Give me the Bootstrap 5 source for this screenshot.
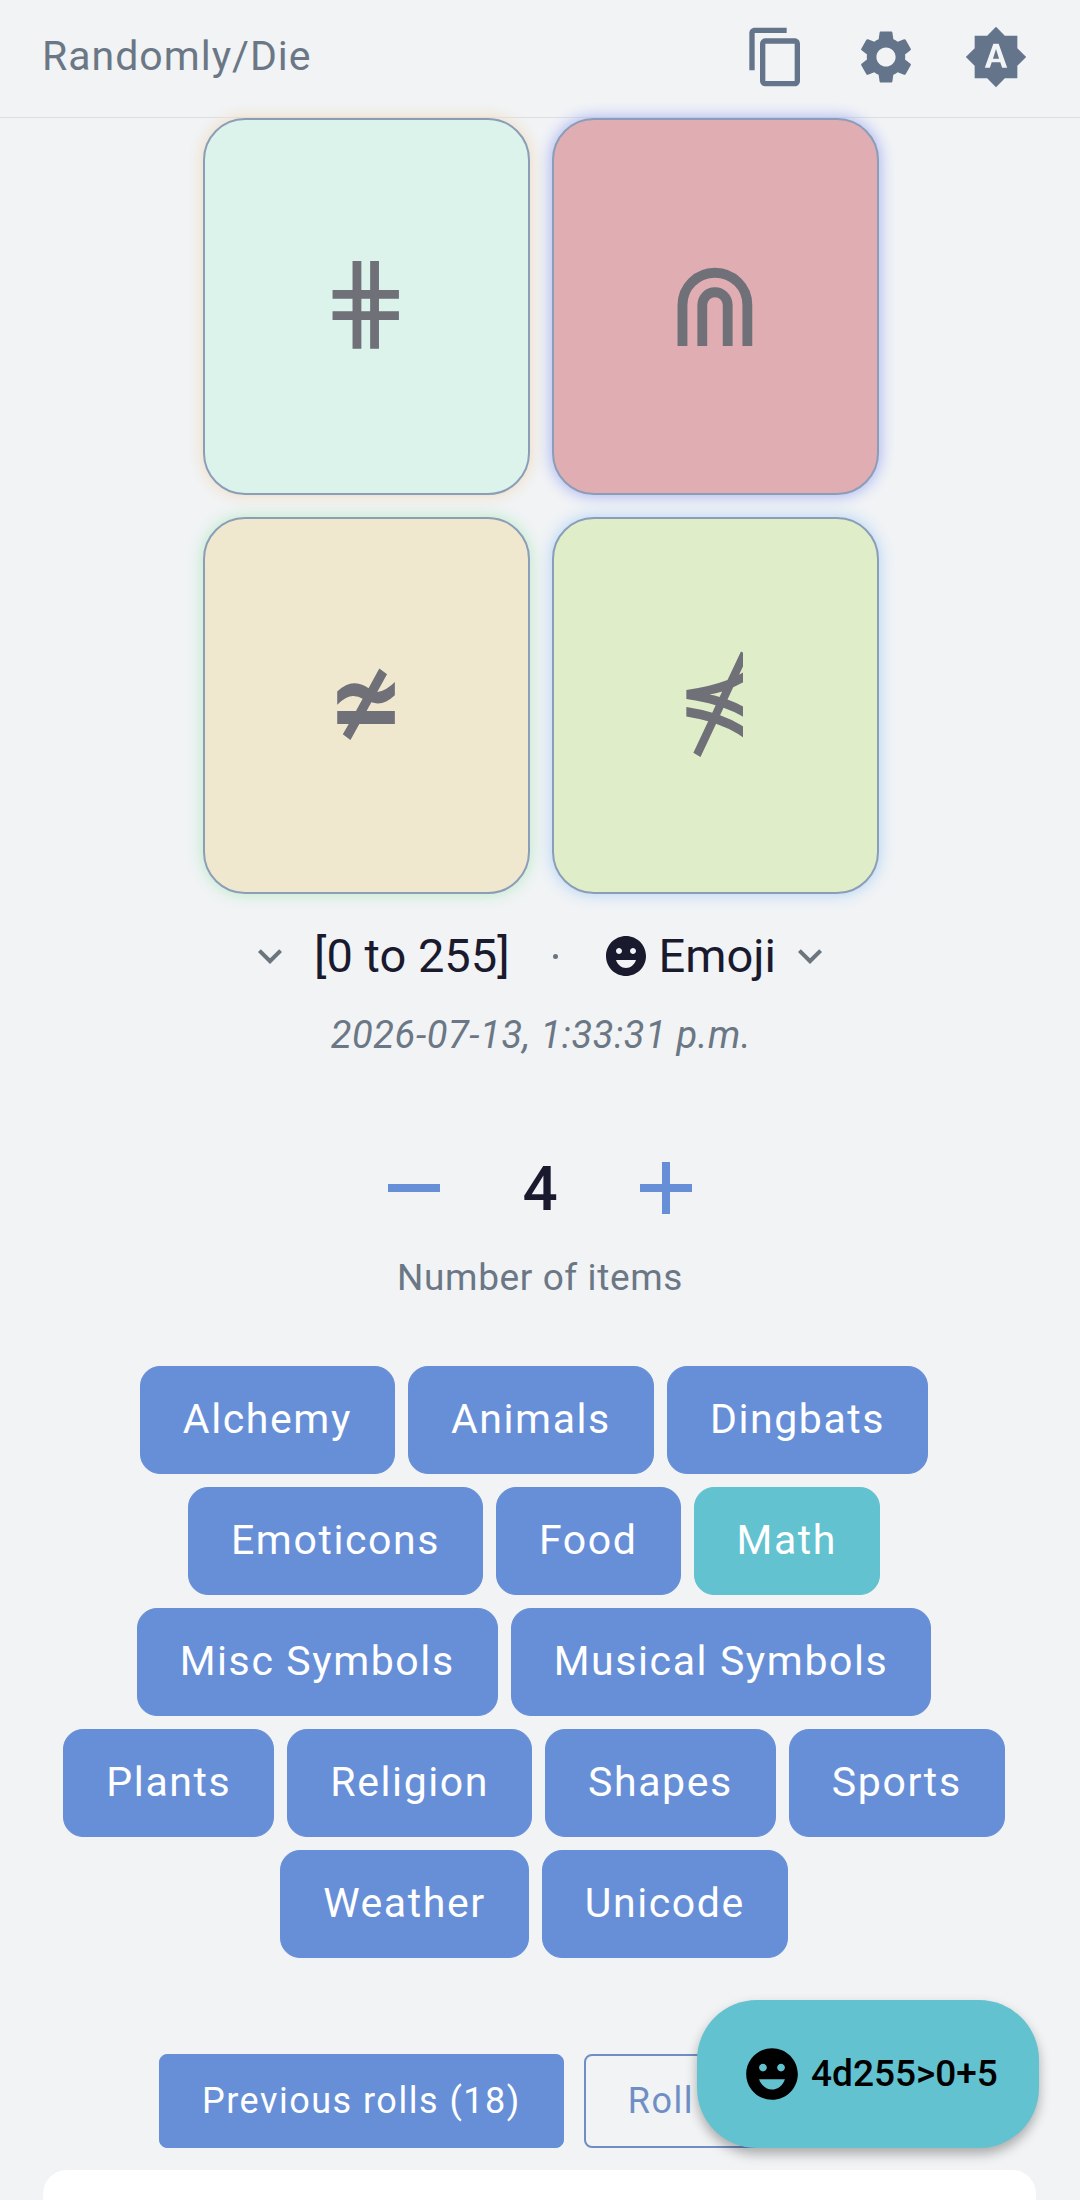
<!DOCTYPE html>
<html lang="en">
<head>
    <meta charset="UTF-8">
    <meta name="viewport" content="width=device-width, initial-scale=1.0">
    <title>Randomly/Die</title>
    <link href="https://cdn.jsdelivr.net/npm/bootstrap@5.3.0/dist/css/bootstrap.min.css" rel="stylesheet">
    <script src="https://cdn.jsdelivr.net/npm/bootstrap@5.3.0/dist/js/bootstrap.bundle.min.js"></script>
    <style>
        html, body {
            height: 2200px;
            overflow: hidden;
        }
        body {
            background-color: #f1f3f5;
            font-family: Roboto, "Liberation Sans", sans-serif;
            color: #1a1a2e;
        }
        .app-bar {
            height: 118px;
            padding: 0 52px 4px 42px;
            border-bottom: 1px solid #dcdee1;
        }
        .app-title {
            font-size: 41px;
            letter-spacing: 1px;
            color: #6b7785;
        }
        .app-icons {
            gap: 46px;
        }
        .app-icons svg {
            width: 64px;
            height: 64px;
            fill: #64748b;
        }
        .dice-grid {
            grid-template-columns: 327px 327px;
            grid-auto-rows: 377px;
            gap: 22px;
            justify-content: center;
            padding-left: 1px;
        }
        .die-face {
            border: 2px solid #8c9db8;
            border-radius: 42px;
            font-family: "DejaVu Sans", sans-serif;
            font-size: 106px;
            line-height: 1;
            color: #6f7078;
        }
        .face-a { background: #dcf3ec; box-shadow: 0 0 14px 2px #f0dfc8; padding-bottom: 10px; }
        .face-b { background: #e0adb3; box-shadow: 0 0 14px 2px #b0baf2; padding-bottom: 4px; font-size: 118px; }
        .face-c { background: #f0e7cf; box-shadow: 0 0 14px 2px #c4ecd0; padding-bottom: 8px; font-weight: 700; font-size: 92px; }
        .face-d { background: #dfedc9; box-shadow: 0 0 14px 2px #bcd9f6; padding-bottom: 14px; font-size: 112px; }
        .glyph-tall {
            display: inline-block;
            transform: scaleY(1.22);
        }
        .glyph-cut {
            display: inline-block;
            width: 68px;
            margin-right: 13px;
            line-height: 1.3;
            overflow: hidden;
        }
        .meta-row {
            height: 72px;
            margin-top: 26px;
            font-size: 47px;
        }
        .meta-row svg {
            width: 48px;
            height: 48px;
        }
        .meta-chevron {
            fill: #6c757d;
        }
        .meta-emoji {
            fill: #1a1a2e;
            margin-right: 9px;
        }
        .meta-range {
            margin: 0 20px;
        }
        .meta-dot {
            width: 5px;
            height: 5px;
            background: #6c757d;
            border-radius: 50%;
            margin: 0 44px 0 23px;
        }
        .meta-type {
            margin-right: 10px;
        }
        .roll-date {
            height: 56px;
            margin-top: 15px;
            padding-left: 2px;
            font-size: 38px;
            font-style: italic;
            line-height: 56px;
            letter-spacing: .6px;
            color: #6b7785;
        }
        .step-row {
            height: 104px;
            margin-top: 73px;
        }
        .step-row svg {
            width: 52px;
            height: 52px;
            fill: #678fd8;
        }
        .step-value {
            width: 200px;
            font-size: 62px;
            font-weight: 500;
            text-align: center;
        }
        .step-label {
            height: 56px;
            margin-top: 10px;
            font-size: 37px;
            line-height: 56px;
            letter-spacing: .6px;
            color: #6b7785;
        }
        .chip-wrap {
            margin-top: 60px;
            gap: 13px;
            padding: 0 66px 0 54px;
        }
        .chip-btn {
            --bs-btn-bg: #678fd8;
            --bs-btn-border-color: #678fd8;
            --bs-btn-color: #fff;
            height: 108px;
            padding: 0 42px;
            border-radius: 20px;
            font-size: 41px;
            letter-spacing: 1.6px;
        }
        .chip-btn.chip-on {
            --bs-btn-bg: #62c2d0;
            --bs-btn-border-color: #62c2d0;
        }
        .action-row {
            margin-top: 96px;
            gap: 20px;
            padding-left: 159px;
        }
        .action-btn {
            --bs-btn-bg: #678fd8;
            --bs-btn-border-color: #678fd8;
            --bs-btn-color: #fff;
            height: 94px;
            padding: 0 42px;
            border-radius: 8px;
            font-size: 36px;
            letter-spacing: 1.5px;
            white-space: nowrap;
        }
        .action-btn.action-outline {
            --bs-btn-bg: transparent;
            --bs-btn-color: #6f8fc4;
            --bs-btn-border-color: #6f8fc4;
            --bs-btn-border-width: 2px;
            width: 333px;
            overflow: hidden;
        }
        .log-panel {
            height: 120px;
            margin: 22px 44px 0 43px;
            background: #fff;
            border-radius: 24px;
        }
        .fab-roll {
            position: absolute;
            top: 2000px;
            left: 697px;
            width: 342px;
            height: 148px;
            border-radius: 60px;
            background: #62c2d0;
            box-shadow: 0 6px 12px rgba(0, 0, 0, 0.3);
            color: #000;
            font-size: 37px;
            font-weight: 500;
            gap: 8px;
            padding-left: 44px;
        }
        .fab-roll svg {
            width: 62px;
            height: 62px;
            fill: #000;
        }
    </style>
</head>
<body>

<nav class="app-bar d-flex align-items-center justify-content-between">
    <span class="app-title">Randomly/Die</span>
    <div class="app-icons d-flex">
        <svg viewBox="0 0 24 24"><path d="M16 1H4c-1.1 0-2 .9-2 2v14h2V3h12V1zm3 4H8c-1.1 0-2 .9-2 2v14c0 1.1.9 2 2 2h11c1.1 0 2-.9 2-2V7c0-1.1-.9-2-2-2zm0 16H8V7h11v14z"/></svg>
        <svg viewBox="0 0 24 24"><path d="M19.14 12.94c.04-.3.06-.61.06-.94 0-.32-.02-.64-.07-.94l2.03-1.58c.18-.14.23-.41.12-.61l-1.92-3.32c-.12-.22-.37-.29-.59-.22l-2.39.96c-.5-.38-1.03-.7-1.62-.94l-.36-2.54c-.04-.24-.24-.41-.48-.41h-3.84c-.24 0-.43.17-.47.41l-.36 2.54c-.59.24-1.13.57-1.62.94l-2.39-.96c-.22-.08-.47 0-.59.22L2.74 8.87c-.12.21-.08.47.12.61l2.03 1.58c-.05.3-.09.63-.09.94s.02.64.07.94l-2.03 1.58c-.18.14-.23.41-.12.61l1.92 3.32c.12.22.37.29.59.22l2.39-.96c.5.38 1.03.7 1.62.94l.36 2.54c.05.24.24.41.48.41h3.84c.24 0 .44-.17.47-.41l.36-2.54c.59-.24 1.13-.56 1.62-.94l2.39.96c.22.08.47 0 .59-.22l1.92-3.32c.12-.22.07-.47-.12-.61l-2.01-1.58zM12 15.6c-1.98 0-3.6-1.62-3.6-3.6s1.62-3.6 3.6-3.6 3.6 1.62 3.6 3.6-1.62 3.6-3.6 3.6z"/></svg>
        <svg viewBox="0 0 24 24"><path d="M10.85 12.65h2.3L12 9l-1.15 3.65zM20 8.69V4h-4.69L12 .69 8.69 4H4v4.69L.69 12 4 15.31V20h4.69L12 23.31 15.31 20H20v-4.69L23.31 12 20 8.69zM14.3 16l-.7-2h-3.2l-.7 2H7.8L11 7h2l3.2 9h-1.9z"/></svg>
    </div>
</nav>

<div class="dice-grid d-grid">
    <div class="die-face face-a d-flex align-items-center justify-content-center">⋕</div>
    <div class="die-face face-b d-flex align-items-center justify-content-center">⋒</div>
    <div class="die-face face-c d-flex align-items-center justify-content-center"><span class="glyph-tall">≄</span></div>
    <div class="die-face face-d d-flex align-items-center justify-content-center"><span class="glyph-cut">⋠</span></div>
</div>

<div class="meta-row d-flex align-items-center justify-content-center">
    <svg class="meta-chevron" viewBox="0 0 24 24"><path d="M16.59 8.59 12 13.17 7.41 8.59 6 10l6 6 6-6z"/></svg>
    <span class="meta-range">[0 to 255]</span>
    <span class="meta-dot"></span>
    <svg class="meta-emoji" viewBox="0 0 24 24"><path d="M11.99 2C6.47 2 2 6.48 2 12s4.47 10 9.99 10C17.52 22 22 17.52 22 12S17.52 2 11.99 2zM8.5 8c.83 0 1.5.67 1.5 1.5S9.33 11 8.5 11 7 10.33 7 9.5 7.67 8 8.5 8zM12 18c-2.28 0-4.22-1.66-5-4h10c-.78 2.34-2.72 4-5 4zm3.5-7c-.83 0-1.5-.67-1.5-1.5S14.67 8 15.5 8s1.5.67 1.5 1.5-.67 1.5-1.5 1.5z"/></svg>
    <span class="meta-type">Emoji</span>
    <svg class="meta-chevron" viewBox="0 0 24 24"><path d="M16.59 8.59 12 13.17 7.41 8.59 6 10l6 6 6-6z"/></svg>
</div>
<div class="roll-date text-center">2026-07-13, 1:33:31 p.m.</div>

<div class="step-row d-flex align-items-center justify-content-center">
    <svg viewBox="0 0 52 52"><rect y="22" width="52" height="8"/></svg>
    <span class="step-value">4</span>
    <svg viewBox="0 0 52 52"><rect y="22" width="52" height="8"/><rect x="22" width="8" height="52"/></svg>
</div>
<div class="step-label text-center">Number of items</div>

<div class="chip-wrap d-flex flex-wrap justify-content-center">
    <button class="btn chip-btn" type="button">Alchemy</button>
    <button class="btn chip-btn" type="button">Animals</button>
    <button class="btn chip-btn" type="button">Dingbats</button>
    <button class="btn chip-btn" type="button">Emoticons</button>
    <button class="btn chip-btn" type="button">Food</button>
    <button class="btn chip-btn chip-on" type="button">Math</button>
    <button class="btn chip-btn" type="button">Misc Symbols</button>
    <button class="btn chip-btn" type="button">Musical Symbols</button>
    <button class="btn chip-btn" type="button">Plants</button>
    <button class="btn chip-btn" type="button">Religion</button>
    <button class="btn chip-btn" type="button">Shapes</button>
    <button class="btn chip-btn" type="button">Sports</button>
    <button class="btn chip-btn" type="button">Weather</button>
    <button class="btn chip-btn" type="button">Unicode</button>
</div>

<div class="action-row d-flex">
    <button class="btn action-btn" type="button">Previous rolls (18)</button>
    <button class="btn action-btn action-outline text-start" type="button">Roll history</button>
</div>

<div class="log-panel"></div>

<div class="fab-roll d-flex align-items-center">
    <svg viewBox="0 0 24 24"><path d="M11.99 2C6.47 2 2 6.48 2 12s4.47 10 9.99 10C17.52 22 22 17.52 22 12S17.52 2 11.99 2zM8.5 8c.83 0 1.5.67 1.5 1.5S9.33 11 8.5 11 7 10.33 7 9.5 7.67 8 8.5 8zM12 18c-2.28 0-4.22-1.66-5-4h10c-.78 2.34-2.72 4-5 4zm3.5-7c-.83 0-1.5-.67-1.5-1.5S14.67 8 15.5 8s1.5.67 1.5 1.5-.67 1.5-1.5 1.5z"/></svg>
    <span>4d255&gt;0+5</span>
</div>

</body>
</html>
